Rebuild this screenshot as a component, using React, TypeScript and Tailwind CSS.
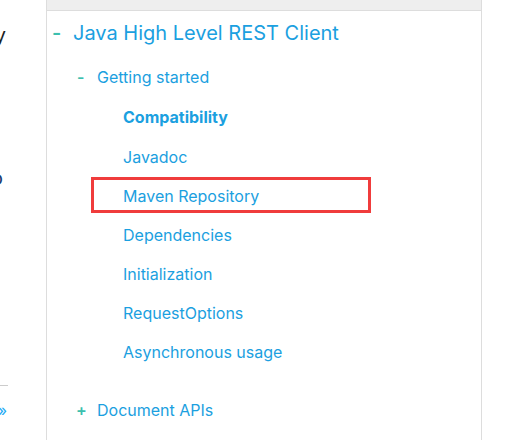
const font = { fontFamily: "Inter, 'Noto Sans', sans-serif" };

type Item = { label: string; bold?: boolean; marked?: boolean };

const items: Item[] = [
  { label: "Compatibility", bold: true },
  { label: "Javadoc" },
  { label: "Maven Repository", marked: true },
  { label: "Dependencies" },
  { label: "Initialization" },
  { label: "RequestOptions" },
  { label: "Asynchronous usage" },
];

export default function App() {
  return (
    <div
      className="flex h-[441px] w-[506px] overflow-hidden bg-white text-[#1ba0e0]"
      style={font}
    >
      {/* cut-off left column */}
      <div className="flex w-[46px] shrink-0 flex-col overflow-hidden">
        <div className="mt-[21px] flex h-[28px] items-center justify-end pr-[40px] text-[20px] text-[#1c1e23]">
          <span className="whitespace-nowrap">Scalability</span>
        </div>
        <div className="mt-[115px] flex h-[28px] items-center justify-end pr-[43px] text-[20px] text-[#1a3c6e]">
          <span className="whitespace-nowrap">Repo</span>
        </div>
        <div className="mt-[193px] h-px w-[8px] bg-[#cccccc]" />
        <div className="mt-[14px] flex h-[20px] items-center justify-end pr-[39px] text-[16px] text-[#1ba9f5]">
          <span className="whitespace-nowrap">Next »</span>
        </div>
      </div>

      <div className="flex h-[440px] w-[436px] shrink-0 flex-col border-x border-[#dddddd]">
        <div className="h-[11px] border-b border-[#dddddd] bg-[#eeeeee]" />
        <div className="pt-[2px]">
          <div className="flex h-[40px] items-center pl-[5px] text-[20px]">
            <span className="w-[21px] font-semibold text-[#3cbfae]">-</span>
            <span>Java High Level REST Client</span>
          </div>
          <div className="mt-[4px] flex h-[40px] items-center pl-[30px] text-[16px]">
            <span className="w-[20px] font-semibold text-[#3cbfae]">-</span>
            <span>Getting started</span>
          </div>
          <ul className="pl-[76px] text-[16px]">
            {items.map((it, i) => (
              <li
                key={it.label}
                className={
                  "relative flex items-center " +
                  (i === 0 ? "h-[40px] font-bold" : "h-[39px]")
                }
              >
                {it.label}
                {it.marked && (
                  <span className="absolute left-[-32px] top-[1px] h-[36px] w-[280px] border-[3px] border-[#f03c3c]" />
                )}
              </li>
            ))}
          </ul>
          <div className="mt-[19px] flex h-[40px] items-center pl-[29px] text-[16px]">
            <span className="w-[21px] font-semibold text-[#3cbfae]">+</span>
            <span>Document APIs</span>
          </div>
        </div>
      </div>
    </div>
  );
}
